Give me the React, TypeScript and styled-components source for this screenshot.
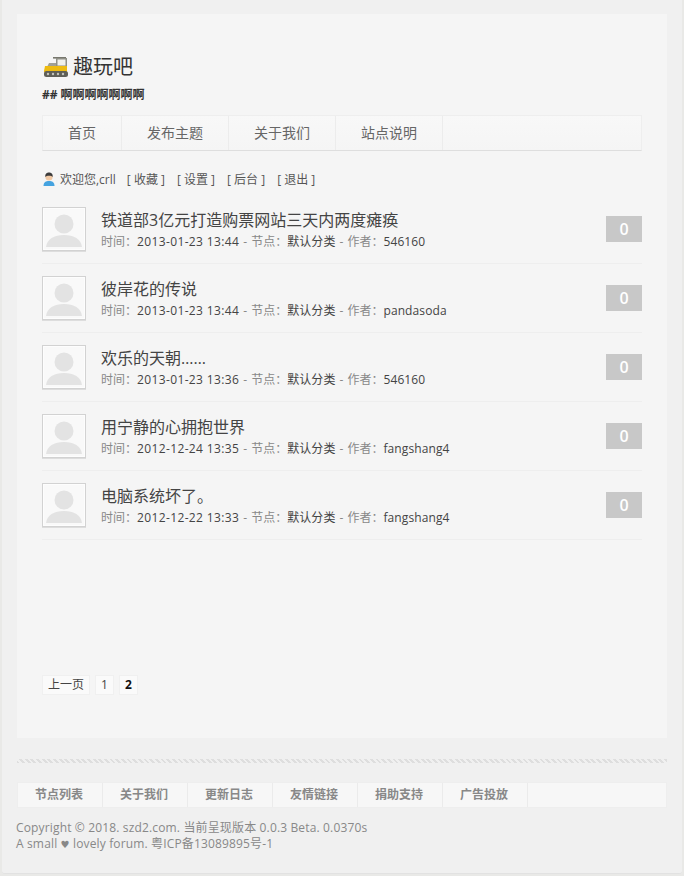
import styled, { createGlobalStyle } from 'styled-components'

const GlobalStyle = createGlobalStyle`
  html, body {
    margin: 0;
    padding: 0;
  }
  body {
    background: #e9e9e7;
    font-family: 'Open Sans', 'Noto Sans CJK SC', sans-serif;
    font-size: 12px;
    color: #333;
  }
`

const posts = [
  { title: '铁道部3亿元打造购票网站三天内两度瘫痪', time: '2013-01-23 13:44', author: '546160' },
  { title: '彼岸花的传说', time: '2013-01-23 13:44', author: 'pandasoda' },
  { title: '欢乐的天朝……', time: '2013-01-23 13:36', author: '546160' },
  { title: '用宁静的心拥抱世界', time: '2012-12-24 13:35', author: 'fangshang4' },
  { title: '电脑系统坏了。', time: '2012-12-22 13:33', author: 'fangshang4' },
]

const navItems = ['首页', '发布主题', '关于我们', '站点说明']
const footerItems = ['节点列表', '关于我们', '更新日志', '友情链接', '捐助支持', '广告投放']
const userLinks = ['收藏', '设置', '后台', '退出']

const Bulldozer = () => (
  <svg width="26" height="24" viewBox="0 0 26 24">
    <rect x="11" y="2" width="13" height="1.6" fill="#77776e" />
    <rect x="14" y="3" width="11" height="9" fill="#8f8f86" />
    <rect x="15.5" y="4.5" width="8" height="6" fill="#f0f0ea" />
    <path d="M5 12 L7 8 L14 8 L14 12 Z" fill="#a0a096" />
    <path d="M2 16 L3 11 L25 11 L25 17 L2 17 Z" fill="#eebb10" />
    <rect x="2" y="16" width="24" height="6" rx="2.5" fill="#5f5f58" />
    <circle cx="6" cy="19" r="1.2" fill="#c4c4bc" />
    <circle cx="11" cy="19" r="1.2" fill="#c4c4bc" />
    <circle cx="16" cy="19" r="1.2" fill="#c4c4bc" />
    <circle cx="21" cy="19" r="1.2" fill="#c4c4bc" />
  </svg>
)

const UserIcon = () => (
  <svg width="12" height="14" viewBox="0 0 12 14">
    <path d="M0.5 14 C0.5 10 3 9 6 9 C9 9 11.5 10 11.5 14 Z" fill="#45a3e0" />
    <circle cx="6" cy="5" r="3.6" fill="#f1c9a5" />
    <path d="M2.3 5 C2 1.5 4 0.5 6 0.5 C8 0.5 10 1.5 9.7 5 C8.6 3.4 3.6 3.4 2.3 5 Z" fill="#3c3c3c" />
  </svg>
)

const Avatar = () => (
  <AvatarFrame>
    <svg width="40" height="40" viewBox="0 0 40 40">
      <circle cx="20" cy="15" r="9.5" fill="#e3e3e3" />
      <path d="M2 38 C3 30 10 26 20 26 C30 26 37 30 38 38 Z" fill="#e3e3e3" />
    </svg>
  </AvatarFrame>
)

const App = () => {
  return (
    <>
      <GlobalStyle />
      <Shell>
        <Panel>
          <Brand>
            <Bulldozer />
            <BrandName>趣玩吧</BrandName>
          </Brand>
          <Tagline>## 啊啊啊啊啊啊啊</Tagline>
          <Nav>
            {navItems.map((item) => (
              <NavItem key={item}>{item}</NavItem>
            ))}
          </Nav>
          <UserBar>
            <UserIcon />
            <Welcome>欢迎您,crll</Welcome>
            {userLinks.map((link) => (
              <UserLink key={link}>[ {link} ]</UserLink>
            ))}
          </UserBar>
          <PostList>
            {posts.map((post) => (
              <Post key={post.title}>
                <Avatar />
                <PostBody>
                  <PostTitle>{post.title}</PostTitle>
                  <PostMeta>
                    时间：<MetaTime>{post.time}</MetaTime>
                    <MetaDash>-</MetaDash>节点：<MetaValue>默认分类</MetaValue>
                    <MetaDash>-</MetaDash>作者：<MetaValue>{post.author}</MetaValue>
                  </PostMeta>
                </PostBody>
                <Count>0</Count>
              </Post>
            ))}
          </PostList>
          <Pager>
            <PageLink>上一页</PageLink>
            <PageLink>1</PageLink>
            <PageLink $current>2</PageLink>
          </Pager>
        </Panel>
        <Divider />
        <FooterNav>
          {footerItems.map((item) => (
            <FooterItem key={item}>{item}</FooterItem>
          ))}
        </FooterNav>
        <Copyright>
          Copyright © 2018. szd2.com. 当前呈现版本 0.0.3 Beta. 0.0370s
          <br />A small <Heart>♥</Heart> lovely forum. 粤ICP备13089895号-1
        </Copyright>
      </Shell>
    </>
  )
}

export default App

const Shell = styled.div`
  box-sizing: border-box;
  width: 680px;
  height: 874px;
  margin-left: 2px;
  padding: 14px 15px 0;
  background: #f0f0f0;
  border-radius: 0 0 3px 3px;
  border-bottom: 1px solid #e2e2e2;
`

const Panel = styled.main`
  box-sizing: border-box;
  height: 724px;
  padding: 41px 25px 0;
  background: #f5f5f5;
  display: flex;
  flex-direction: column;
`

const Brand = styled.div`
  display: flex;
  align-items: center;
  gap: 5px;
  height: 24px;
`

const BrandName = styled.h1`
  margin: 0;
  font-size: 20px;
  font-weight: 400;
  line-height: 24px;
  color: #333;
`

const Tagline = styled.p`
  margin: 7px 0 0;
  font-size: 12px;
  font-weight: 700;
  line-height: 18px;
  color: #333;
`

const Nav = styled.nav`
  display: flex;
  height: 34px;
  margin-top: 11px;
  background: linear-gradient(#f8f8f8, #f5f5f5);
  border: 1px solid #eeeeee;
  border-bottom: 1px solid #dedede;
`

const NavItem = styled.a`
  padding: 0 25px;
  font-size: 14px;
  line-height: 33px;
  color: #666;
  border-right: 1px solid #ececec;
`

const UserBar = styled.div`
  display: flex;
  align-items: center;
  height: 18px;
  margin-top: 19px;
  padding-left: 1px;
  color: #555;
`

const Welcome = styled.span`
  margin-left: 5px;
  margin-right: 6px;
`

const UserLink = styled.a`
  margin-left: 5px;
  margin-right: 7px;
  color: #555;
`

const PostList = styled.ul`
  list-style: none;
  margin: 7px 0 0;
  padding: 0;
`

const Post = styled.li`
  display: flex;
  align-items: flex-start;
  height: 56px;
  padding-top: 12px;
  border-bottom: 1px solid #eeeeee;
`

const AvatarFrame = styled.div`
  box-sizing: border-box;
  width: 44px;
  height: 44px;
  padding: 1px;
  flex: none;
  background: #f9f9f9;
  border: 1px solid #d2d2d2;
  box-shadow: 0 1px 0 #dddddd, inset 0 0 0 1px #fdfdfd;
  overflow: hidden;
  line-height: 0;
`

const PostBody = styled.div`
  flex: 1;
  margin-left: 15px;
  padding-top: 1px;
`

const PostTitle = styled.div`
  font-size: 16px;
  line-height: 24px;
  color: #444;
`

const PostMeta = styled.div`
  margin-top: 1px;
  font-size: 12px;
  line-height: 18px;
  color: #888;
`

const MetaTime = styled.span`
  color: #444;
  letter-spacing: 0.37px;
`

const MetaValue = styled.span`
  color: #444;
  letter-spacing: 0.1px;
`

const MetaDash = styled.span`
  margin: 0 4px;
`

const Count = styled.span`
  width: 36px;
  height: 26px;
  margin-top: 9px;
  flex: none;
  background: #c8c8c8;
  color: #fff;
  font-size: 16px;
  font-weight: 600;
  line-height: 26px;
  text-align: center;
`

const Pager = styled.div`
  display: flex;
  gap: 5px;
  margin-top: 135px;
`

const PageLink = styled.a<{ $current?: boolean }>`
  padding: 0 5px;
  height: 18px;
  line-height: 18px;
  background: #fafafa;
  border: 1px solid #f0f0f0;
  font-weight: ${(p) => (p.$current ? 700 : 400)};
  color: ${(p) => (p.$current ? '#111' : '#444')};
`

const Divider = styled.div`
  height: 4px;
  margin-top: 21px;
  background: repeating-linear-gradient(45deg, #dedede 0 2px, #f0f0f0 2px 4px);
`

const FooterNav = styled.nav`
  display: flex;
  height: 24px;
  margin-top: 19px;
  background: #f7f7f7;
  border: 1px solid #eeeeee;
`

const FooterItem = styled.a`
  padding: 0 17px;
  width: 50px;
  font-size: 12px;
  font-weight: 700;
  line-height: 24px;
  color: #888;
  border-right: 1px solid #ebebeb;
`

const Copyright = styled.footer`
  margin: 12px 0 0 -1px;
  font-size: 12px;
  line-height: 16px;
  letter-spacing: 0.15px;
  color: #888;
`

const Heart = styled.span`
  font-family: 'DejaVu Sans', sans-serif;
  font-size: 10px;
`
